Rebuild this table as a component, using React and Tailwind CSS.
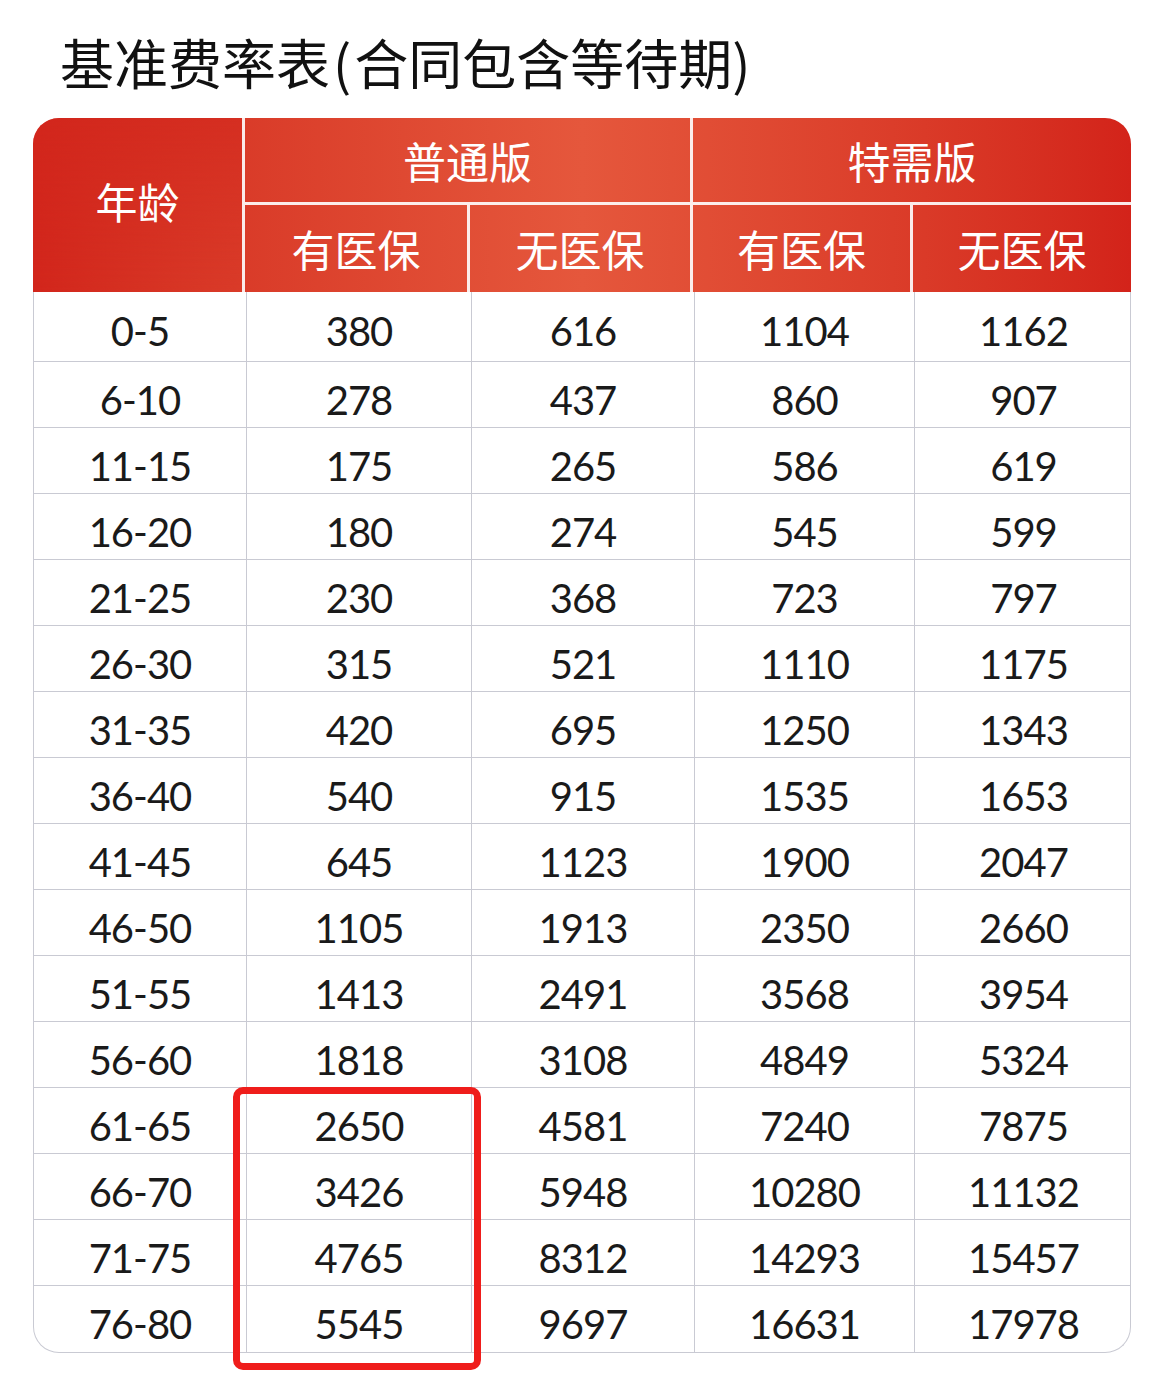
const rows = [
  ["0-5", "380", "616", "1104", "1162"],
  ["6-10", "278", "437", "860", "907"],
  ["11-15", "175", "265", "586", "619"],
  ["16-20", "180", "274", "545", "599"],
  ["21-25", "230", "368", "723", "797"],
  ["26-30", "315", "521", "1110", "1175"],
  ["31-35", "420", "695", "1250", "1343"],
  ["36-40", "540", "915", "1535", "1653"],
  ["41-45", "645", "1123", "1900", "2047"],
  ["46-50", "1105", "1913", "2350", "2660"],
  ["51-55", "1413", "2491", "3568", "3954"],
  ["56-60", "1818", "3108", "4849", "5324"],
  ["61-65", "2650", "4581", "7240", "7875"],
  ["66-70", "3426", "5948", "10280", "11132"],
  ["71-75", "4765", "8312", "14293", "15457"],
  ["76-80", "5545", "9697", "16631", "17978"],
];

const cols = "grid-cols-[212px_225px_223px_220px_218px]";
const cjk = "font-['Noto_Sans_CJK_SC',sans-serif]";

export default function App() {
  return (
    <div className="relative min-h-[1388px] w-[1170px] bg-white pt-[35px] pl-[33px]">
      <h1 className={`ml-[27px] text-[54px] leading-[54px] text-[#111] ${cjk}`}>
        基准费率表<span className="mx-[3px]">(</span>合同包含等待期)
      </h1>

      <div className="mt-[29px] w-[1098px]">
        {/* header */}
        <div
          className={`grid ${cols} grid-rows-[87px_87px] h-[174px] rounded-t-[26px] overflow-hidden bg-linear-to-r from-[#d2251b] via-[#e5573c] to-[#d3231a] text-white ${cjk}`}
        >
          <div className="row-span-2 flex items-center justify-center pb-[10px] text-[42px] border-r-[3px] border-white/90 bg-linear-to-b from-[#d2261c]/60 to-transparent">
            年龄
          </div>
          <div className="col-span-2 flex items-center justify-center text-[43px] border-r-[3px] border-b-[3px] border-white/90">
            普通版
          </div>
          <div className="col-span-2 flex items-center justify-center text-[43px] border-b-[3px] border-white/90">
            特需版
          </div>
          <div className="flex items-center justify-center text-[43px] border-r-[3px] border-white/90">
            有医保
          </div>
          <div className="flex items-center justify-center text-[43px] border-r-[3px] border-white/90">
            无医保
          </div>
          <div className="flex items-center justify-center text-[43px] border-r-[3px] border-white/90">
            有医保
          </div>
          <div className="flex items-center justify-center text-[43px]">无医保</div>
        </div>

        {/* body */}
        <div className="rounded-b-[26px] border border-t-0 border-[#c9cad3] overflow-hidden font-['Lato',sans-serif] text-[40px] tracking-[-1px] text-[#1a1a1a]">
          {rows.map((r, i) => (
            <div
              key={r[0]}
              className={`grid ${cols} ${i === 0 ? "h-[70px]" : "h-[66px]"} ${i < rows.length - 1 ? "border-b border-[#c9cad3]" : ""}`}
            >
              {r.map((v, j) => (
                <div
                  key={j}
                  className={`flex items-center justify-center pt-[8px] ${j > 0 ? "border-l border-[#c9cad3]" : ""}`}
                >
                  {v}
                </div>
              ))}
            </div>
          ))}
        </div>
      </div>

      {/* highlight box */}
      <div className="absolute left-[233px] top-[1087px] w-[248px] h-[283px] rounded-[10px] border-[7px] border-[#ef1d1b]" />
    </div>
  );
}
